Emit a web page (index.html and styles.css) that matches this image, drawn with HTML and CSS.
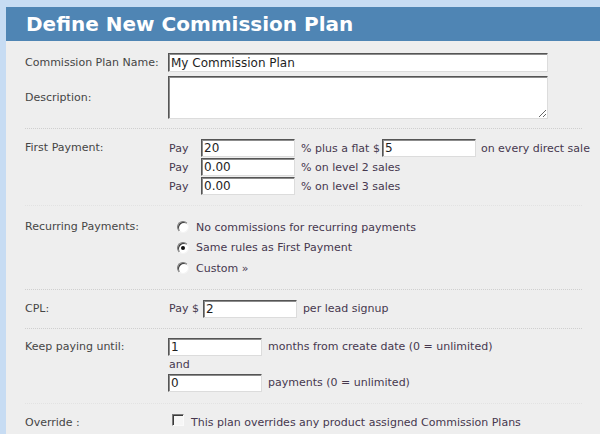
FILE: index.html
```html
<!DOCTYPE html>
<html>
<head>
<meta charset="utf-8">
<title>Define New Commission Plan</title>
<link rel="stylesheet" href="styles.css">
</head>
<body>
<div class="panel">
  <h1 class="title">Define New Commission Plan</h1>

  <div class="section sec-name">
    <label class="label">Commission Plan Name:</label>
    <div class="value"><input class="field field-wide" type="text" value="My Commission Plan"></div>
    <label class="label">Description:</label>
    <div class="value"><textarea class="field field-area"></textarea></div>
  </div>

  <div class="section sec-first faint">
    <div class="label line18">First Payment:</div>
    <div class="pay-grid">
      <span class="txt">Pay</span>
      <input class="field field-num" type="text" value="20">
      <span class="txt after">% plus a flat $ <input class="field field-num" type="text" value="5"> on every direct sale</span>
      <span class="txt">Pay</span>
      <input class="field field-num" type="text" value="0.00">
      <span class="txt after">% on level 2 sales</span>
      <span class="txt">Pay</span>
      <input class="field field-num" type="text" value="0.00">
      <span class="txt after">% on level 3 sales</span>
    </div>
  </div>

  <div class="section sec-recur">
    <div class="label line20">Recurring Payments:</div>
    <div class="radios">
      <div class="radio-row"><span class="radio"></span><span class="txt">No commissions for recurring payments</span></div>
      <div class="radio-row"><span class="radio checked"></span><span class="txt">Same rules as First Payment</span></div>
      <div class="radio-row"><span class="radio"></span><span class="txt">Custom &raquo;</span></div>
    </div>
  </div>

  <div class="section sec-cpl">
    <div class="label line18">CPL:</div>
    <div class="row-inline"><span class="txt">Pay $</span><input class="field field-num" type="text" value="2"><span class="txt">per lead signup</span></div>
  </div>

  <div class="section sec-keep faint">
    <div class="label line18">Keep paying until:</div>
    <div class="keep">
      <div class="row-inline"><input class="field field-num" type="text" value="1"><span class="txt">months from create date (0 = unlimited)</span></div>
      <div class="txt line18">and</div>
      <div class="row-inline"><input class="field field-num" type="text" value="0"><span class="txt">payments (0 = unlimited)</span></div>
    </div>
  </div>

  <div class="section sec-over last">
    <div class="label line16">Override :</div>
    <div class="row-inline check-row"><span class="checkbox"></span><span class="txt">This plan overrides any product assigned Commission Plans</span></div>
  </div>
</div>
</body>
</html>
```
FILE: styles.css
```css
html, body {
  margin: 0;
  padding: 0;
}
body {
  background: #c7dcf3;
  font-family: "DejaVu Sans", Verdana, sans-serif;
  font-size: 11px;
  color: #454048;
  width: 600px;
  height: 434px;
  overflow: hidden;
}
.panel {
  margin: 7px 0 0 6px;
  background: #eeeeee;
  height: 427px;
}
.title {
  margin: 0;
  height: 34px;
  line-height: 34px;
  padding-left: 20px;
  background: #4f85b4;
  color: #ffffff;
  font-size: 20px;
  font-weight: bold;
  letter-spacing: 0;
}
.section {
  display: grid;
  grid-template-columns: 143px 1fr;
  margin: 0 18px 0 19px;
  border-bottom: 1px dotted #cfcfcf;
}
.section.faint {
  border-bottom-color: #e2e2e2;
}
.section.last {
  border-bottom: 0;
}
.label {
  color: #454545;
}
.line16 { line-height: 16px; }
.line18 { line-height: 18px; }
.line20 { line-height: 20px; }

.field {
  box-sizing: border-box;
  margin: 0;
  height: 18px;
  padding: 0 2px;
  font-family: "DejaVu Sans", Verdana, sans-serif;
  font-size: 12px;
  color: #1e1e1e;
  background: #ffffff;
  border-style: solid;
  border-width: 1px;
  border-color: #555555 #dcdcdc #dcdcdc #555555;
  box-shadow: inset 1px 1px 0 #8c8c8c;
  outline: none;
  vertical-align: middle;
}
.field-wide {
  width: 380px;
  height: 19px;
  display: block;
}
.field-area {
  display: block;
  width: 380px;
  height: 43px;
  resize: both;
}
.field-num {
  width: 94px;
}

.sec-name {
  padding: 12px 0 9px;
  row-gap: 4px;
  align-items: center;
}

.sec-first {
  padding: 10px 0 10px;
}
.pay-grid {
  display: grid;
  grid-template-columns: 32px 94px auto;
  grid-auto-rows: 18px;
  row-gap: 1px;
  align-items: center;
  margin-left: 1px;
}
.pay-grid .after {
  padding-left: 6px;
  display: flex;
  align-items: center;
  gap: 0;
  white-space: nowrap;
}
.pay-grid .after .field {
  margin: 0 5px 0 2px;
}
.txt {
  color: #46384e;
  white-space: nowrap;
}

.sec-recur {
  padding: 11px 0 10px;
}
.radios {
  display: flex;
  flex-direction: column;
  padding-left: 9px;
}
.radio-row {
  display: flex;
  align-items: center;
  height: 20.5px;
  gap: 7px;
}
.radio {
  box-sizing: border-box;
  width: 12px;
  height: 12px;
  border-radius: 50%;
  background: #ffffff;
  border: 1px solid;
  border-color: #7a7a7a #f4f4f4 #f4f4f4 #7a7a7a;
  box-shadow: inset 1px 1px 0 #3a3a3a;
  position: relative;
  flex: none;
}
.radio.checked::after {
  content: "";
  position: absolute;
  left: 3px;
  top: 3px;
  width: 4px;
  height: 4px;
  border-radius: 50%;
  background: #111111;
}

.sec-cpl {
  padding: 10px 0 10px;
}
.row-inline {
  display: flex;
  align-items: center;
  height: 18px;
  gap: 6px;
}
.sec-cpl .row-inline {
  margin-left: 1px;
  gap: 4px;
}
.sec-cpl .row-inline .field {
  margin-right: 2px;
}

.sec-keep {
  padding: 9px 0 11px;
}
.keep {
  display: flex;
  flex-direction: column;
}
.keep .line18 {
  padding-left: 1px;
}

.sec-over {
  padding: 11px 0 0;
}
.check-row {
  height: 16px;
  gap: 7px;
  padding-left: 4px;
}
.checkbox {
  box-sizing: border-box;
  width: 12px;
  height: 12px;
  margin-top: -6px;
  background: #f6f6f6;
  border: 1px solid;
  border-color: #7a7a7a #fafafa #fafafa #7a7a7a;
  box-shadow: inset 1px 1px 0 #3a3a3a;
  flex: none;
}
```
